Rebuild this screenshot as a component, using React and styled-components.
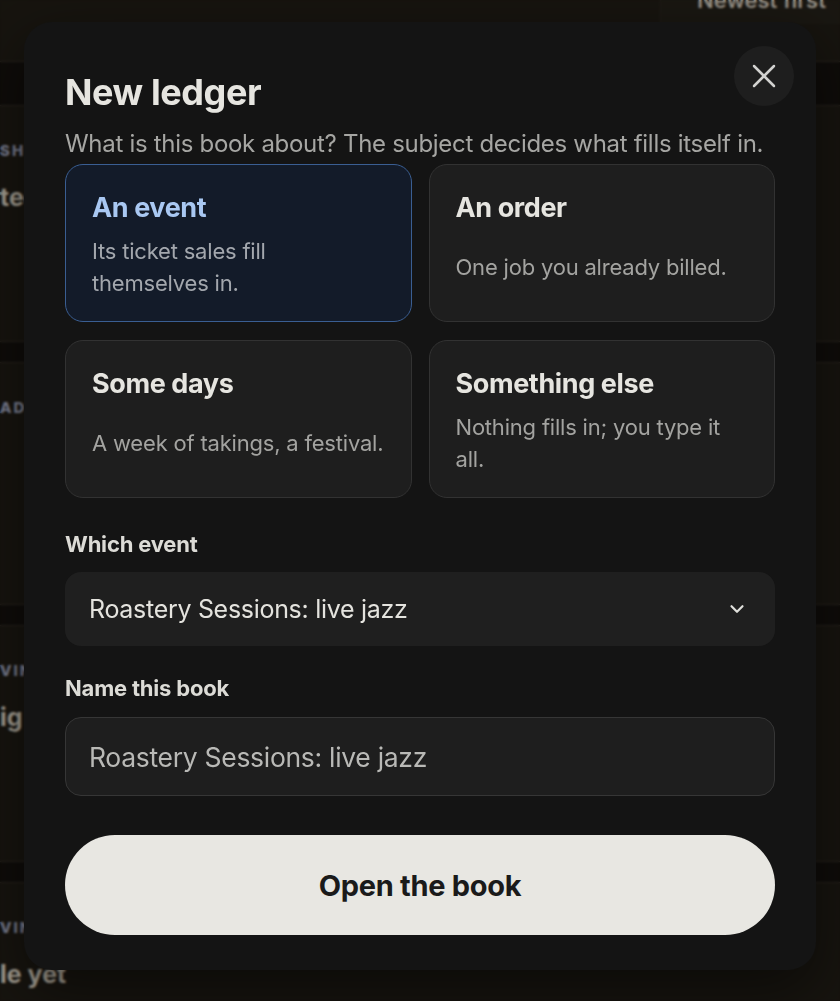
import { useState } from 'react';
import styled, { createGlobalStyle } from 'styled-components';
import { X, ChevronDown } from 'lucide-react';

const GlobalStyle = createGlobalStyle`
    html, body {
        margin: 0;
        height: 100%;
        overflow: hidden;
        background: #110e0b;
        font-family: Inter, "Noto Sans", "Liberation Sans", sans-serif;
        -webkit-font-smoothing: antialiased;
    }
    * { box-sizing: border-box; }
`;

// Page behind the dialog

const Page = styled.div`
    margin-top: -24px;
    display: flex;
    flex-direction: column;
`;

const PageHeader = styled.header`
    height: 86px;
    background: #1a1711;
    border-bottom: 1px solid #2c2721;
    display: flex;
    justify-content: flex-end;
`;

const SortButton = styled.div`
    width: 180px;
    height: 48px;
    padding-left: 36px;
    display: flex;
    align-items: center;
    border-left: 1px solid #221e19;
    background: #1d1a14;
    color: #aca59a;
    font-size: 22px;
    font-weight: 600;
`;

const List = styled.div`
    padding-top: 43px;
    display: flex;
    flex-direction: column;
    gap: 20px;
`;

const BgCard = styled.section`
    height: ${p => p.$h}px;
    background: #1a1711;
    border-top: 1px solid #2c2721;
    border-bottom: 1px solid #2c2721;
    padding-top: 36px;
    display: flex;
    flex-direction: column;
    gap: 22px;
`;

const Eyebrow = styled.div`
    font-size: 15px;
    line-height: 18px;
    font-weight: 800;
    letter-spacing: 2px;
    text-transform: uppercase;
    color: #888da2;
`;

const BgTitle = styled.div`
    font-size: 25px;
    line-height: 30px;
    font-weight: 700;
    color: #b9b2a4;
`;

// Dialog

const Overlay = styled.div`
    position: fixed;
    inset: 0;
    background: rgba(0, 0, 0, 0.12);
    backdrop-filter: blur(1px);
    padding: 22px 24px;
    display: flex;
    align-items: flex-start;
`;

const Dialog = styled.div`
    position: relative;
    width: 792px;
    background: #141414;
    border-radius: 28px;
    padding: 49px 41px 35px;
    box-shadow: 0 20px 60px rgba(0, 0, 0, 0.5);
    display: flex;
    flex-direction: column;
`;

const CloseButton = styled.button`
    position: absolute;
    top: 24px;
    right: 22px;
    width: 60px;
    height: 60px;
    border-radius: 50%;
    border: none;
    background: #1e1e1e;
    color: #d2d2d0;
    display: flex;
    align-items: center;
    justify-content: center;
    padding: 0;
    cursor: pointer;
`;

const Title = styled.h1`
    margin: 0;
    font-size: 36px;
    line-height: 42px;
    font-weight: 700;
    letter-spacing: -0.4px;
    color: #e6e5e0;
`;

const Subtitle = styled.p`
    margin: 16px 0 5px;
    font-size: 24px;
    line-height: 30px;
    color: #a6a6a3;
    letter-spacing: -0.3px;
`;

const Choices = styled.div`
    display: grid;
    grid-template-columns: 1fr 1fr;
    column-gap: 17px;
    row-gap: 18px;
`;

const Choice = styled.button`
    text-align: left;
    font-family: inherit;
    cursor: pointer;
    border-radius: 18px;
    padding: 26px 24px 22px 26px;
    display: flex;
    flex-direction: column;
    gap: 10px;
    background: ${p => (p.$active ? '#131b29' : '#1e1e1e')};
    border: 1px solid ${p => (p.$active ? '#3a5e92' : '#323232')};
`;

const ChoiceTitle = styled.div`
    font-size: 27px;
    line-height: 34px;
    font-weight: 700;
    letter-spacing: -0.4px;
    color: ${p => (p.$active ? '#a9c8f2' : '#e6e5e0')};
`;

const ChoiceText = styled.div`
    min-height: 64px;
    display: flex;
    align-items: center;
    white-space: pre-line;
    font-size: 22px;
    line-height: 32px;
    color: ${p => (p.$active ? '#a3a7ad' : '#a3a3a0')};
    letter-spacing: -0.2px;
`;

const Label = styled.label`
    display: block;
    font-size: 22px;
    line-height: 24px;
    font-weight: 700;
    letter-spacing: -0.2px;
    color: #dcdbd6;
    margin-top: ${p => p.$top}px;
    margin-bottom: ${p => p.$bottom}px;
`;

const SelectBox = styled.div`
    height: 74px;
    border-radius: 16px;
    background: #1f1f1f;
    padding: 0 27px 0 24px;
    display: flex;
    align-items: center;
    justify-content: space-between;
    font-size: 25px;
    color: #e4e3de;
    letter-spacing: -0.3px;
`;

const TextInput = styled.input`
    height: 79px;
    border-radius: 16px;
    background: #1e1e1e;
    border: 1.5px solid #363636;
    padding: 0 23px;
    font-family: inherit;
    font-size: 26.5px;
    color: #b9b9b6;
    letter-spacing: -0.3px;
    outline: none;
`;

const SubmitButton = styled.button`
    margin-top: 39px;
    height: 100px;
    border-radius: 50px;
    border: none;
    background: #e8e7e2;
    color: #1a1a1a;
    font-family: inherit;
    font-size: 29px;
    font-weight: 700;
    letter-spacing: -0.3px;
    cursor: pointer;
`;

const choices = [
    { id: 'event', title: 'An event', text: 'Its ticket sales fill\nthemselves in.' },
    { id: 'order', title: 'An order', text: 'One job you already billed.' },
    { id: 'days', title: 'Some days', text: 'A week of takings, a festival.' },
    { id: 'other', title: 'Something else', text: 'Nothing fills in; you type it all.' },
];

function App() {
    const [subject, setSubject] = useState('event');
    const [name, setName] = useState('Roastery Sessions: live jazz');

    return (
        <>
            <GlobalStyle />
            <Page>
                <PageHeader>
                    <SortButton>Newest first</SortButton>
                </PageHeader>
                <List>
                    <BgCard $h={237}>
                        <Eyebrow>Shows</Eyebrow>
                        <BgTitle>tequila tasting</BgTitle>
                    </BgCard>
                    <BgCard $h={243}>
                        <Eyebrow>Added</Eyebrow>
                    </BgCard>
                    <BgCard $h={237}>
                        <Eyebrow>Vinyl</Eyebrow>
                        <BgTitle>ig night</BgTitle>
                    </BgCard>
                    <BgCard $h={240}>
                        <Eyebrow>Vinyl</Eyebrow>
                        <BgTitle>le yet</BgTitle>
                    </BgCard>
                </List>
            </Page>

            <Overlay>
                <Dialog>
                    <CloseButton aria-label="Close">
                        <X size={40} strokeWidth={1.5} />
                    </CloseButton>
                    <Title>New ledger</Title>
                    <Subtitle>What is this book about? The subject decides what fills itself in.</Subtitle>

                    <Choices>
                        {choices.map(c => (
                            <Choice
                                key={c.id}
                                $active={subject === c.id}
                                onClick={() => setSubject(c.id)}>
                                <ChoiceTitle $active={subject === c.id}>{c.title}</ChoiceTitle>
                                <ChoiceText $active={subject === c.id}>{c.text}</ChoiceText>
                            </Choice>
                        ))}
                    </Choices>

                    <Label $top={34} $bottom={16}>Which event</Label>
                    <SelectBox>
                        Roastery Sessions: live jazz
                        <ChevronDown size={22} strokeWidth={2.4} color="#e0e0dc" />
                    </SelectBox>

                    <Label $top={30} $bottom={17}>Name this book</Label>
                    <TextInput value={name} onChange={e => setName(e.target.value)} />

                    <SubmitButton type="button">Open the book</SubmitButton>
                </Dialog>
            </Overlay>
        </>
    );
}

export default App;
